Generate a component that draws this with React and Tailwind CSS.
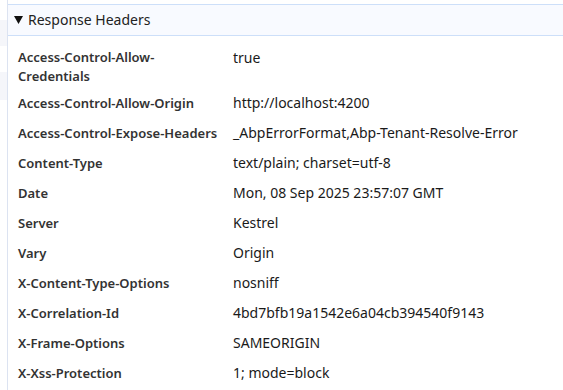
import React from "react";

const rows = [
  ["Access-Control-Allow-Origin", "http://localhost:4200"],
  ["Access-Control-Expose-Headers", "_AbpErrorFormat,Abp-Tenant-Resolve-Error"],
  ["Content-Type", "text/plain; charset=utf-8"],
  ["Date", "Mon, 08 Sep 2025 23:57:07 GMT"],
  ["Server", "Kestrel"],
  ["Vary", "Origin"],
  ["X-Content-Type-Options", "nosniff"],
  ["X-Correlation-Id", "4bd7bfb19a1542e6a04cb394540f9143"],
  ["X-Frame-Options", "SAMEORIGIN"],
  ["X-Xss-Protection", "1; mode=block"],
];

export default function App() {
  return (
    <div
      className="flex w-[563px] h-[390px] overflow-hidden bg-white"
      style={{ fontFamily: '"Noto Sans", "Open Sans", Arial, sans-serif' }}
    >
      <div className="w-[8px] shrink-0 border-r border-[#dce3f1] flex flex-col">
        <div className="h-[20px] bg-white" />
        <div className="h-[26px] bg-[#f5f6fa]" />
        <div className="h-[26px] bg-white" />
        <div className="h-[28px] bg-[#f5f6fa]" />
        <div className="flex-1 bg-white" />
      </div>
      <div className="flex-1 flex flex-col">
        <div className="mt-[4px] h-[32px] border-y border-[#cddff9] bg-[#f8faff] flex items-center pl-[6px]">
          <svg width="9" height="8" viewBox="0 0 9 8" className="mr-[5px]">
            <path d="M0 0 L9 0 L4.5 8 Z" fill="#111" />
          </svg>
          <span className="text-[14px] text-[#222] leading-none">Response Headers</span>
        </div>
        <div className="pt-[8px] pl-[10px]">
          <div className="flex pt-[4px] pb-[2px] leading-[19px]">
            <div className="w-[215px] shrink-0 font-semibold text-[13px] text-[#333]">
              Access-Control-Allow-
              <br />
              Credentials
            </div>
            <div className="text-[#1a1a1a] text-[14px]">true</div>
          </div>
          {rows.map(([k, v]) => (
            <div key={k} className="flex items-center py-[5px] leading-[20px]">
              <div className="w-[215px] shrink-0 font-semibold text-[13px] text-[#333] whitespace-nowrap">{k}</div>
              <div className="text-[#1a1a1a] text-[14px] whitespace-nowrap">{v}</div>
            </div>
          ))}
        </div>
      </div>
    </div>
  );
}
